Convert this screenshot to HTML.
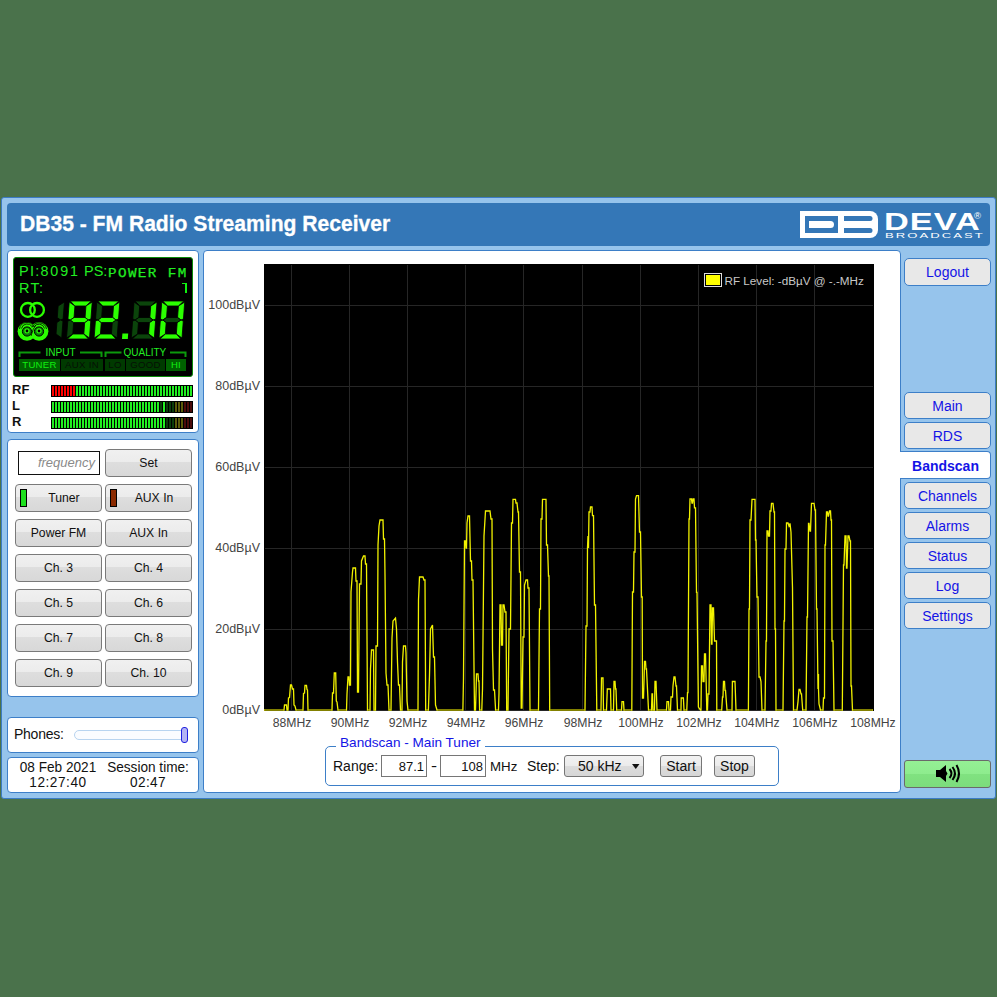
<!DOCTYPE html>
<html><head><meta charset="utf-8"><style>
*{box-sizing:border-box;margin:0;padding:0}
html,body{width:997px;height:997px;overflow:hidden;background:#4a724b;font-family:"Liberation Sans",sans-serif;position:relative}
.a{position:absolute}
.frame{left:1px;top:197px;width:995px;height:602px;background:#96c4ec;border:1px solid #3c7cc4;border-radius:3px}
.hdr{left:7px;top:203px;width:983px;height:43px;background:#3477b7;border-radius:4px}
.title{left:20px;top:210.5px;letter-spacing:0px;font:bold 22.2px/25px "Liberation Sans",sans-serif;color:#fff;white-space:nowrap;transform:scaleX(0.95);transform-origin:0 0;-webkit-text-stroke:0.3px #fff}
.pnl{background:#fff;border:1px solid #3d7fc8;border-radius:4px}
.lcd{left:13px;top:257px;width:180px;height:120px;background:#000;border:1px solid #0a8a0a;border-radius:3px}
.g{color:#22ee22;white-space:nowrap}
.lbl{font:bold 13px/14px "Liberation Sans",sans-serif;color:#111}
.btn{height:28px;border:1px solid #7a7a7a;border-radius:4px;background:linear-gradient(#f0f0f0 0,#ececec 45%,#dedede 46%,#d8d8d8 100%);font:12.2px/26.2px "Liberation Sans",sans-serif;color:#111;text-align:center;white-space:nowrap}
.nav{left:904px;width:87px;height:27px;border:1px solid #3d7fc8;border-radius:5px;background:#e8e8e8;font:14px/26.6px "Liberation Sans",sans-serif;color:#1414e6;text-align:center}
.navact{left:900px;width:91px;height:28px;border:1px solid #3d7fc8;border-left:none;border-radius:0 4px 4px 0;background:#fff;font:bold 14px/28.2px "Liberation Sans",sans-serif;color:#1414e6;text-align:center;padding-left:1px}
.xl{font:12.2px/14px "Liberation Sans",sans-serif;color:#444;text-align:center}
.yl{font:12.5px/14px "Liberation Sans",sans-serif;color:#444;text-align:right}
.t13{font:14px/16px "Liberation Sans",sans-serif;color:#111;white-space:nowrap}
.inp{height:22px;border:1px solid #767676;background:#fff;font:13px/21.5px "Liberation Sans",sans-serif;color:#111;text-align:right;padding-right:2px}
.sbtn{height:22px;border:1px solid #767676;border-radius:3px;background:linear-gradient(#f2f2f2 0,#ebebeb 50%,#dcdcdc 51%,#d6d6d6 100%);font:14px/20px "Liberation Sans",sans-serif;color:#111;text-align:center}
</style></head><body>
<div class="a frame"></div>
<div class="a hdr"></div>
<div class="a title">DB35 - FM Radio Streaming Receiver</div>
<svg class="a" style="left:0;top:0" width="997" height="997">
<path d="M800,211 H870 A8,8 0 0 1 878,219 V230 A8,8 0 0 1 870,238 H800 Z" fill="#fff"/>
<rect x="805" y="216" width="33" height="17" fill="#3477b7"/>
<path d="M809,221 H830.5 A3.5,3.5 0 0 1 834,224.5 A3.5,3.5 0 0 1 830.5,228 H809 Z" fill="#fff"/>
<path d="M844,216 H870 A2.5,2.5 0 0 1 872.5,218.5 A2.5,2.5 0 0 1 870,221 H844 Z" fill="#3477b7"/>
<path d="M844,228 H870 A2.5,2.5 0 0 1 872.5,230.5 A2.5,2.5 0 0 1 870,233 H844 Z" fill="#3477b7"/>
</svg>
<div class="a" style="left:883.5px;top:209.5px;font:bold 23.5px/24px 'Liberation Sans',sans-serif;color:#fff;letter-spacing:0.7px;transform:scaleX(1.46);transform-origin:0 0;white-space:nowrap">DEVA</div>
<div class="a" style="left:884.5px;top:231.5px;font:7.8px/8px 'Liberation Sans',sans-serif;color:#fff;letter-spacing:1.2px;transform:scaleX(1.68);transform-origin:0 0;white-space:nowrap">BROADCAST</div>
<div class="a" style="left:974px;top:211px;font:9.5px/10px 'Liberation Sans',sans-serif;color:#fff">®</div>

<!-- left panel 1 -->
<div class="a pnl" style="left:7px;top:250px;width:192px;height:183px"></div>
<div class="a lcd"></div>
<div class="a g" style="left:19px;top:263px;font:14.5px/16px 'Liberation Sans',sans-serif;letter-spacing:1.3px">PI:</div>
<div class="a g" style="left:40.5px;top:262.5px;font:14.3px/16px 'Liberation Sans',sans-serif;letter-spacing:1.9px">8091</div>
<div class="a g" style="left:84px;top:263px;font:14.5px/16px 'Liberation Sans',sans-serif">PS:</div>
<div class="a g" style="left:107.5px;top:266px;font:13px/15px 'Liberation Mono',monospace;letter-spacing:1.25px;transform:scaleX(1.1);transform-origin:0 0;-webkit-text-stroke:0.25px #22ee22">POWER FM</div>
<div class="a g" style="left:19px;top:280px;font:14.5px/16px 'Liberation Sans',sans-serif;letter-spacing:1.3px">RT:</div>
<div class="a" style="left:182px;top:283px;width:5px;height:1.3px;background:#10f010"></div><div class="a" style="left:185px;top:283px;width:2px;height:10px;background:#10f010"></div>
<svg class="a" style="left:0;top:0" width="200" height="400">
<circle cx="27.9" cy="309.9" r="6.9" fill="none" stroke="#2bff00" stroke-width="2.3"/>
<circle cx="37" cy="309.9" r="6.9" fill="none" stroke="#2bff00" stroke-width="2.3"/>
<circle cx="27" cy="331.3" r="9.4" fill="#2bff00"/>
<circle cx="39" cy="331.3" r="9.4" fill="#2bff00"/>
<path d="M19.5,329 A7.6,7.6 0 0 1 34,327 M21.5,328.5 A5.8,5.8 0 0 1 32,326.5 M32,327.5 A7.6,7.6 0 0 1 46.5,329 M34,326.8 A5.8,5.8 0 0 1 44.5,328.5" fill="none" stroke="#000" stroke-width="0.8"/>
<circle cx="27" cy="331.5" r="4.6" fill="#0a7a0a" stroke="#000" stroke-width="1"/><circle cx="39" cy="331.5" r="4.6" fill="#0a7a0a" stroke="#000" stroke-width="1"/><circle cx="27" cy="330.8" r="2.6" fill="#2bff00"/><circle cx="39" cy="330.8" r="2.6" fill="#2bff00"/>
<path d="M31,336 Q33,328 36,325" fill="none" stroke="#000" stroke-width="0.8"/>
<circle cx="27" cy="331" r="1.4" fill="#000"/>
<circle cx="39" cy="331" r="1.4" fill="#000"/>
<g transform="translate(41.5,301) skewX(-4.3)"><polygon points="23,1 23,18 20.5,19 17,16.5 17,5" fill="#0b440b" stroke="#000" stroke-width="0.8" stroke-linejoin="round"/><polygon points="23,20 23,37 17,33 17,21.5 20.5,19" fill="#0b440b" stroke="#000" stroke-width="0.8" stroke-linejoin="round"/></g><g transform="translate(69.3,301) skewX(-4.3)"><polygon points="1,0 22,0 17,5 6,5" fill="#2bff00" stroke="#000" stroke-width="0.8" stroke-linejoin="round"/><polygon points="23,1 23,18 20.5,19 17,16.5 17,5" fill="#2bff00" stroke="#000" stroke-width="0.8" stroke-linejoin="round"/><polygon points="23,20 23,37 17,33 17,21.5 20.5,19" fill="#2bff00" stroke="#000" stroke-width="0.8" stroke-linejoin="round"/><polygon points="1,38 22,38 17,33 6,33" fill="#2bff00" stroke="#000" stroke-width="0.8" stroke-linejoin="round"/><polygon points="0,20 2.5,19 6,21.5 6,33 0,37" fill="#0b440b" stroke="#000" stroke-width="0.8" stroke-linejoin="round"/><polygon points="0,1 6,5 6,16.5 2.5,19 0,18" fill="#2bff00" stroke="#000" stroke-width="0.8" stroke-linejoin="round"/><polygon points="2.5,19 6,16.5 17,16.5 20.5,19 17,21.5 6,21.5" fill="#2bff00" stroke="#000" stroke-width="0.8" stroke-linejoin="round"/></g><g transform="translate(96.9,301) skewX(-4.3)"><polygon points="1,0 22,0 17,5 6,5" fill="#2bff00" stroke="#000" stroke-width="0.8" stroke-linejoin="round"/><polygon points="23,1 23,18 20.5,19 17,16.5 17,5" fill="#2bff00" stroke="#000" stroke-width="0.8" stroke-linejoin="round"/><polygon points="23,20 23,37 17,33 17,21.5 20.5,19" fill="#0b440b" stroke="#000" stroke-width="0.8" stroke-linejoin="round"/><polygon points="1,38 22,38 17,33 6,33" fill="#2bff00" stroke="#000" stroke-width="0.8" stroke-linejoin="round"/><polygon points="0,20 2.5,19 6,21.5 6,33 0,37" fill="#2bff00" stroke="#000" stroke-width="0.8" stroke-linejoin="round"/><polygon points="0,1 6,5 6,16.5 2.5,19 0,18" fill="#0b440b" stroke="#000" stroke-width="0.8" stroke-linejoin="round"/><polygon points="2.5,19 6,16.5 17,16.5 20.5,19 17,21.5 6,21.5" fill="#2bff00" stroke="#000" stroke-width="0.8" stroke-linejoin="round"/></g><polygon points="122.4,333.5 128.2,333.5 127.8,339 122,339" fill="#2bff00"/><g transform="translate(134.1,301) skewX(-4.3)"><polygon points="1,0 22,0 17,5 6,5" fill="#0b440b" stroke="#000" stroke-width="0.8" stroke-linejoin="round"/><polygon points="23,1 23,18 20.5,19 17,16.5 17,5" fill="#2bff00" stroke="#000" stroke-width="0.8" stroke-linejoin="round"/><polygon points="23,20 23,37 17,33 17,21.5 20.5,19" fill="#2bff00" stroke="#000" stroke-width="0.8" stroke-linejoin="round"/><polygon points="1,38 22,38 17,33 6,33" fill="#0b440b" stroke="#000" stroke-width="0.8" stroke-linejoin="round"/><polygon points="0,20 2.5,19 6,21.5 6,33 0,37" fill="#0b440b" stroke="#000" stroke-width="0.8" stroke-linejoin="round"/><polygon points="0,1 6,5 6,16.5 2.5,19 0,18" fill="#0b440b" stroke="#000" stroke-width="0.8" stroke-linejoin="round"/><polygon points="2.5,19 6,16.5 17,16.5 20.5,19 17,21.5 6,21.5" fill="#0b440b" stroke="#000" stroke-width="0.8" stroke-linejoin="round"/></g><g transform="translate(161.8,301) skewX(-4.3)"><polygon points="1,0 22,0 17,5 6,5" fill="#2bff00" stroke="#000" stroke-width="0.8" stroke-linejoin="round"/><polygon points="23,1 23,18 20.5,19 17,16.5 17,5" fill="#2bff00" stroke="#000" stroke-width="0.8" stroke-linejoin="round"/><polygon points="23,20 23,37 17,33 17,21.5 20.5,19" fill="#2bff00" stroke="#000" stroke-width="0.8" stroke-linejoin="round"/><polygon points="1,38 22,38 17,33 6,33" fill="#2bff00" stroke="#000" stroke-width="0.8" stroke-linejoin="round"/><polygon points="0,20 2.5,19 6,21.5 6,33 0,37" fill="#2bff00" stroke="#000" stroke-width="0.8" stroke-linejoin="round"/><polygon points="0,1 6,5 6,16.5 2.5,19 0,18" fill="#2bff00" stroke="#000" stroke-width="0.8" stroke-linejoin="round"/><polygon points="2.5,19 6,16.5 17,16.5 20.5,19 17,21.5 6,21.5" fill="#0b440b" stroke="#000" stroke-width="0.8" stroke-linejoin="round"/></g>
<path d="M19.5,357 V352.5 H40.5 M80,352.5 H101.5 V357" fill="none" stroke="#0c9a0c" stroke-width="2"/>
<path d="M105.5,357 V352.5 H121.5 M170,352.5 H185.5 V357" fill="none" stroke="#0c9a0c" stroke-width="2"/>
<rect x="19" y="359" width="41" height="12" fill="#006200"/>
<rect x="61" y="359" width="42" height="12" fill="#003a00"/>
<rect x="105" y="359" width="20" height="12" fill="#003a00"/>
<rect x="126" y="359" width="39" height="12" fill="#003a00"/>
<rect x="166" y="359" width="20" height="12" fill="#006200"/>
</svg>
<div class="a g" style="left:45.5px;top:347px;font:10px/12px 'Liberation Sans',sans-serif">INPUT</div>
<div class="a g" style="left:123.5px;top:347px;font:10px/12px 'Liberation Sans',sans-serif">QUALITY</div>
<div class="a" style="left:19px;top:359px;width:41px;font:9.6px/12px 'Liberation Sans',sans-serif;color:#10ee10;text-align:center;letter-spacing:0.3px">TUNER</div>
<div class="a" style="left:61px;top:359px;width:42px;font:9.6px/12px 'Liberation Sans',sans-serif;color:#061006;text-align:center;letter-spacing:0.3px">AUX IN</div>
<div class="a" style="left:105px;top:359px;width:20px;font:9.6px/12px 'Liberation Sans',sans-serif;color:#061006;text-align:center;letter-spacing:0.3px">LO</div>
<div class="a" style="left:126px;top:359px;width:39px;font:9.6px/12px 'Liberation Sans',sans-serif;color:#061006;text-align:center;letter-spacing:0.3px">GOOD</div>
<div class="a" style="left:166px;top:359px;width:20px;font:9.6px/12px 'Liberation Sans',sans-serif;color:#10ee10;text-align:center;letter-spacing:0.3px">HI</div>
<div class="a lbl" style="left:12px;top:383px">RF</div>
<div class="a lbl" style="left:12px;top:399px">L</div>
<div class="a lbl" style="left:12px;top:415px">R</div>
<div class="a" style="left:51px;top:385px;width:142px;height:12px;background:#000"></div><div class="a" style="left:52px;top:386px;width:2px;height:10px;background:#ff0000"></div><div class="a" style="left:55px;top:386px;width:2px;height:10px;background:#ff0000"></div><div class="a" style="left:58px;top:386px;width:2px;height:10px;background:#ff0000"></div><div class="a" style="left:61px;top:386px;width:2px;height:10px;background:#ff0000"></div><div class="a" style="left:64px;top:386px;width:2px;height:10px;background:#ff0000"></div><div class="a" style="left:67px;top:386px;width:2px;height:10px;background:#ff0000"></div><div class="a" style="left:70px;top:386px;width:2px;height:10px;background:#ff0000"></div><div class="a" style="left:73px;top:386px;width:2px;height:10px;background:#ff0000"></div><div class="a" style="left:76px;top:386px;width:2px;height:10px;background:#22ee22"></div><div class="a" style="left:79px;top:386px;width:2px;height:10px;background:#22ee22"></div><div class="a" style="left:82px;top:386px;width:2px;height:10px;background:#22ee22"></div><div class="a" style="left:85px;top:386px;width:2px;height:10px;background:#22ee22"></div><div class="a" style="left:88px;top:386px;width:2px;height:10px;background:#22ee22"></div><div class="a" style="left:91px;top:386px;width:2px;height:10px;background:#22ee22"></div><div class="a" style="left:94px;top:386px;width:2px;height:10px;background:#22ee22"></div><div class="a" style="left:97px;top:386px;width:2px;height:10px;background:#22ee22"></div><div class="a" style="left:100px;top:386px;width:2px;height:10px;background:#22ee22"></div><div class="a" style="left:103px;top:386px;width:2px;height:10px;background:#22ee22"></div><div class="a" style="left:106px;top:386px;width:2px;height:10px;background:#22ee22"></div><div class="a" style="left:109px;top:386px;width:2px;height:10px;background:#22ee22"></div><div class="a" style="left:112px;top:386px;width:2px;height:10px;background:#22ee22"></div><div class="a" style="left:115px;top:386px;width:2px;height:10px;background:#22ee22"></div><div class="a" style="left:118px;top:386px;width:2px;height:10px;background:#22ee22"></div><div class="a" style="left:121px;top:386px;width:2px;height:10px;background:#22ee22"></div><div class="a" style="left:124px;top:386px;width:2px;height:10px;background:#22ee22"></div><div class="a" style="left:127px;top:386px;width:2px;height:10px;background:#22ee22"></div><div class="a" style="left:130px;top:386px;width:2px;height:10px;background:#22ee22"></div><div class="a" style="left:133px;top:386px;width:2px;height:10px;background:#22ee22"></div><div class="a" style="left:136px;top:386px;width:2px;height:10px;background:#22ee22"></div><div class="a" style="left:139px;top:386px;width:2px;height:10px;background:#22ee22"></div><div class="a" style="left:142px;top:386px;width:2px;height:10px;background:#22ee22"></div><div class="a" style="left:145px;top:386px;width:2px;height:10px;background:#22ee22"></div><div class="a" style="left:148px;top:386px;width:2px;height:10px;background:#22ee22"></div><div class="a" style="left:151px;top:386px;width:2px;height:10px;background:#22ee22"></div><div class="a" style="left:154px;top:386px;width:2px;height:10px;background:#22ee22"></div><div class="a" style="left:157px;top:386px;width:2px;height:10px;background:#22ee22"></div><div class="a" style="left:160px;top:386px;width:2px;height:10px;background:#22ee22"></div><div class="a" style="left:163px;top:386px;width:2px;height:10px;background:#22ee22"></div><div class="a" style="left:166px;top:386px;width:2px;height:10px;background:#22ee22"></div><div class="a" style="left:169px;top:386px;width:2px;height:10px;background:#22ee22"></div><div class="a" style="left:172px;top:386px;width:2px;height:10px;background:#22ee22"></div><div class="a" style="left:175px;top:386px;width:2px;height:10px;background:#22ee22"></div><div class="a" style="left:178px;top:386px;width:2px;height:10px;background:#22ee22"></div><div class="a" style="left:181px;top:386px;width:2px;height:10px;background:#22ee22"></div><div class="a" style="left:184px;top:386px;width:2px;height:10px;background:#22ee22"></div><div class="a" style="left:187px;top:386px;width:2px;height:10px;background:#22ee22"></div><div class="a" style="left:190px;top:386px;width:2px;height:10px;background:#22ee22"></div><div class="a" style="left:51px;top:401px;width:142px;height:12px;background:#000"></div><div class="a" style="left:52px;top:402px;width:2px;height:10px;background:#22ee22"></div><div class="a" style="left:55px;top:402px;width:2px;height:10px;background:#22ee22"></div><div class="a" style="left:58px;top:402px;width:2px;height:10px;background:#22ee22"></div><div class="a" style="left:61px;top:402px;width:2px;height:10px;background:#22ee22"></div><div class="a" style="left:64px;top:402px;width:2px;height:10px;background:#22ee22"></div><div class="a" style="left:67px;top:402px;width:2px;height:10px;background:#22ee22"></div><div class="a" style="left:70px;top:402px;width:2px;height:10px;background:#22ee22"></div><div class="a" style="left:73px;top:402px;width:2px;height:10px;background:#22ee22"></div><div class="a" style="left:76px;top:402px;width:2px;height:10px;background:#22ee22"></div><div class="a" style="left:79px;top:402px;width:2px;height:10px;background:#22ee22"></div><div class="a" style="left:82px;top:402px;width:2px;height:10px;background:#22ee22"></div><div class="a" style="left:85px;top:402px;width:2px;height:10px;background:#22ee22"></div><div class="a" style="left:88px;top:402px;width:2px;height:10px;background:#22ee22"></div><div class="a" style="left:91px;top:402px;width:2px;height:10px;background:#22ee22"></div><div class="a" style="left:94px;top:402px;width:2px;height:10px;background:#22ee22"></div><div class="a" style="left:97px;top:402px;width:2px;height:10px;background:#22ee22"></div><div class="a" style="left:100px;top:402px;width:2px;height:10px;background:#22ee22"></div><div class="a" style="left:103px;top:402px;width:2px;height:10px;background:#22ee22"></div><div class="a" style="left:106px;top:402px;width:2px;height:10px;background:#22ee22"></div><div class="a" style="left:109px;top:402px;width:2px;height:10px;background:#22ee22"></div><div class="a" style="left:112px;top:402px;width:2px;height:10px;background:#22ee22"></div><div class="a" style="left:115px;top:402px;width:2px;height:10px;background:#22ee22"></div><div class="a" style="left:118px;top:402px;width:2px;height:10px;background:#22ee22"></div><div class="a" style="left:121px;top:402px;width:2px;height:10px;background:#22ee22"></div><div class="a" style="left:124px;top:402px;width:2px;height:10px;background:#22ee22"></div><div class="a" style="left:127px;top:402px;width:2px;height:10px;background:#22ee22"></div><div class="a" style="left:130px;top:402px;width:2px;height:10px;background:#22ee22"></div><div class="a" style="left:133px;top:402px;width:2px;height:10px;background:#22ee22"></div><div class="a" style="left:136px;top:402px;width:2px;height:10px;background:#22ee22"></div><div class="a" style="left:139px;top:402px;width:2px;height:10px;background:#22ee22"></div><div class="a" style="left:142px;top:402px;width:2px;height:10px;background:#22ee22"></div><div class="a" style="left:145px;top:402px;width:2px;height:10px;background:#22ee22"></div><div class="a" style="left:148px;top:402px;width:2px;height:10px;background:#22ee22"></div><div class="a" style="left:151px;top:402px;width:2px;height:10px;background:#22ee22"></div><div class="a" style="left:154px;top:402px;width:2px;height:10px;background:#22ee22"></div><div class="a" style="left:157px;top:402px;width:2px;height:10px;background:#22ee22"></div><div class="a" style="left:160px;top:402px;width:2px;height:10px;background:#0a3d0a"></div><div class="a" style="left:163px;top:402px;width:2px;height:10px;background:#22ee22"></div><div class="a" style="left:166px;top:402px;width:2px;height:10px;background:#0a3d0a"></div><div class="a" style="left:169px;top:402px;width:2px;height:10px;background:#0a3d0a"></div><div class="a" style="left:172px;top:402px;width:2px;height:10px;background:#0a3d0a"></div><div class="a" style="left:175px;top:402px;width:2px;height:10px;background:#5a5a0a"></div><div class="a" style="left:178px;top:402px;width:2px;height:10px;background:#5a5a0a"></div><div class="a" style="left:181px;top:402px;width:2px;height:10px;background:#5a5a0a"></div><div class="a" style="left:184px;top:402px;width:2px;height:10px;background:#4a0a0a"></div><div class="a" style="left:187px;top:402px;width:2px;height:10px;background:#4a0a0a"></div><div class="a" style="left:190px;top:402px;width:2px;height:10px;background:#4a0a0a"></div><div class="a" style="left:51px;top:417px;width:142px;height:12px;background:#000"></div><div class="a" style="left:52px;top:418px;width:2px;height:10px;background:#22ee22"></div><div class="a" style="left:55px;top:418px;width:2px;height:10px;background:#22ee22"></div><div class="a" style="left:58px;top:418px;width:2px;height:10px;background:#22ee22"></div><div class="a" style="left:61px;top:418px;width:2px;height:10px;background:#22ee22"></div><div class="a" style="left:64px;top:418px;width:2px;height:10px;background:#22ee22"></div><div class="a" style="left:67px;top:418px;width:2px;height:10px;background:#22ee22"></div><div class="a" style="left:70px;top:418px;width:2px;height:10px;background:#22ee22"></div><div class="a" style="left:73px;top:418px;width:2px;height:10px;background:#22ee22"></div><div class="a" style="left:76px;top:418px;width:2px;height:10px;background:#22ee22"></div><div class="a" style="left:79px;top:418px;width:2px;height:10px;background:#22ee22"></div><div class="a" style="left:82px;top:418px;width:2px;height:10px;background:#22ee22"></div><div class="a" style="left:85px;top:418px;width:2px;height:10px;background:#22ee22"></div><div class="a" style="left:88px;top:418px;width:2px;height:10px;background:#22ee22"></div><div class="a" style="left:91px;top:418px;width:2px;height:10px;background:#22ee22"></div><div class="a" style="left:94px;top:418px;width:2px;height:10px;background:#22ee22"></div><div class="a" style="left:97px;top:418px;width:2px;height:10px;background:#22ee22"></div><div class="a" style="left:100px;top:418px;width:2px;height:10px;background:#22ee22"></div><div class="a" style="left:103px;top:418px;width:2px;height:10px;background:#22ee22"></div><div class="a" style="left:106px;top:418px;width:2px;height:10px;background:#22ee22"></div><div class="a" style="left:109px;top:418px;width:2px;height:10px;background:#22ee22"></div><div class="a" style="left:112px;top:418px;width:2px;height:10px;background:#22ee22"></div><div class="a" style="left:115px;top:418px;width:2px;height:10px;background:#22ee22"></div><div class="a" style="left:118px;top:418px;width:2px;height:10px;background:#22ee22"></div><div class="a" style="left:121px;top:418px;width:2px;height:10px;background:#22ee22"></div><div class="a" style="left:124px;top:418px;width:2px;height:10px;background:#22ee22"></div><div class="a" style="left:127px;top:418px;width:2px;height:10px;background:#22ee22"></div><div class="a" style="left:130px;top:418px;width:2px;height:10px;background:#22ee22"></div><div class="a" style="left:133px;top:418px;width:2px;height:10px;background:#22ee22"></div><div class="a" style="left:136px;top:418px;width:2px;height:10px;background:#22ee22"></div><div class="a" style="left:139px;top:418px;width:2px;height:10px;background:#22ee22"></div><div class="a" style="left:142px;top:418px;width:2px;height:10px;background:#22ee22"></div><div class="a" style="left:145px;top:418px;width:2px;height:10px;background:#22ee22"></div><div class="a" style="left:148px;top:418px;width:2px;height:10px;background:#22ee22"></div><div class="a" style="left:151px;top:418px;width:2px;height:10px;background:#22ee22"></div><div class="a" style="left:154px;top:418px;width:2px;height:10px;background:#22ee22"></div><div class="a" style="left:157px;top:418px;width:2px;height:10px;background:#22ee22"></div><div class="a" style="left:160px;top:418px;width:2px;height:10px;background:#22ee22"></div><div class="a" style="left:163px;top:418px;width:2px;height:10px;background:#22ee22"></div><div class="a" style="left:166px;top:418px;width:2px;height:10px;background:#0a3d0a"></div><div class="a" style="left:169px;top:418px;width:2px;height:10px;background:#0a3d0a"></div><div class="a" style="left:172px;top:418px;width:2px;height:10px;background:#0a3d0a"></div><div class="a" style="left:175px;top:418px;width:2px;height:10px;background:#5a5a0a"></div><div class="a" style="left:178px;top:418px;width:2px;height:10px;background:#5a5a0a"></div><div class="a" style="left:181px;top:418px;width:2px;height:10px;background:#5a5a0a"></div><div class="a" style="left:184px;top:418px;width:2px;height:10px;background:#4a0a0a"></div><div class="a" style="left:187px;top:418px;width:2px;height:10px;background:#4a0a0a"></div><div class="a" style="left:190px;top:418px;width:2px;height:10px;background:#4a0a0a"></div>

<!-- left panel 2 -->
<div class="a pnl" style="left:7px;top:439px;width:192px;height:258px"></div>
<div class="a" style="left:18px;top:451px;width:82px;height:24px;border:1px solid #111;background:#fff"></div><div class="a" style="left:18px;top:451px;width:77px;height:24px;font:italic 13px/24px 'Liberation Sans',sans-serif;color:#8a8a8a;text-align:right">frequency</div><div class="a btn" style="left:105px;top:449px;width:87px;">Set</div><div class="a btn" style="left:15px;top:484px;width:87px;padding-left:11px;">Tuner</div><div class="a" style="left:20px;top:489px;width:7px;height:18px;background:#1ee01e;border:1px solid #000"></div><div class="a btn" style="left:105px;top:484px;width:87px;padding-left:11px;">AUX In</div><div class="a" style="left:110px;top:489px;width:7px;height:18px;background:#8b2a00;border:1px solid #000"></div><div class="a btn" style="left:15px;top:519px;width:87px;">Power FM</div><div class="a btn" style="left:105px;top:519px;width:87px;">AUX In</div><div class="a btn" style="left:15px;top:554px;width:87px;">Ch. 3</div><div class="a btn" style="left:105px;top:554px;width:87px;">Ch. 4</div><div class="a btn" style="left:15px;top:589px;width:87px;">Ch. 5</div><div class="a btn" style="left:105px;top:589px;width:87px;">Ch. 6</div><div class="a btn" style="left:15px;top:624px;width:87px;">Ch. 7</div><div class="a btn" style="left:105px;top:624px;width:87px;">Ch. 8</div><div class="a btn" style="left:15px;top:659px;width:87px;">Ch. 9</div><div class="a btn" style="left:105px;top:659px;width:87px;">Ch. 10</div>

<!-- phones -->
<div class="a pnl" style="left:7px;top:717px;width:192px;height:36px"></div>
<div class="a t13" style="left:14px;top:725.5px;font-size:14px;letter-spacing:-0.25px">Phones:</div>
<div class="a" style="left:74px;top:730px;width:113px;height:10px;border:1px solid #b8d4f0;border-radius:5px;background:#fafcff"></div>
<div class="a" style="left:181px;top:727px;width:7px;height:16px;border:1px solid #2020e0;border-radius:3px;background:#b4b4f4"></div>

<!-- date -->
<div class="a pnl" style="left:7px;top:757px;width:192px;height:36px"></div>
<div class="a t13" style="left:9px;top:760.3px;width:98px;text-align:center;line-height:14.8px;font-size:14.8px;transform:scaleX(0.92);transform-origin:50% 0">08 Feb 2021<br><span style='letter-spacing:0.6px'>12:27:40</span></div>
<div class="a t13" style="left:99.5px;top:760.3px;width:96px;text-align:center;line-height:14.8px;font-size:14.8px;transform:scaleX(0.92);transform-origin:50% 0">Session time:<br><span style='letter-spacing:0.4px'>02:47</span></div>

<!-- main panel -->
<div class="a pnl" style="left:203px;top:250px;width:698px;height:543px"></div>
<svg class="a" style="left:0;top:0" width="997" height="997">
<rect x="264" y="264" width="610" height="447" fill="#000"/>
<line x1="291.5" y1="265" x2="291.5" y2="710" stroke="#262626" stroke-width="1"/><line x1="349.5" y1="265" x2="349.5" y2="710" stroke="#262626" stroke-width="1"/><line x1="407.5" y1="265" x2="407.5" y2="710" stroke="#262626" stroke-width="1"/><line x1="465.5" y1="265" x2="465.5" y2="710" stroke="#262626" stroke-width="1"/><line x1="523.5" y1="265" x2="523.5" y2="710" stroke="#262626" stroke-width="1"/><line x1="582.5" y1="265" x2="582.5" y2="710" stroke="#262626" stroke-width="1"/><line x1="640.5" y1="265" x2="640.5" y2="710" stroke="#262626" stroke-width="1"/><line x1="698.5" y1="265" x2="698.5" y2="710" stroke="#262626" stroke-width="1"/><line x1="756.5" y1="265" x2="756.5" y2="710" stroke="#262626" stroke-width="1"/><line x1="814.5" y1="265" x2="814.5" y2="710" stroke="#262626" stroke-width="1"/><line x1="265" y1="305.5" x2="873" y2="305.5" stroke="#262626" stroke-width="1"/><line x1="265" y1="386.5" x2="873" y2="386.5" stroke="#262626" stroke-width="1"/><line x1="265" y1="467.5" x2="873" y2="467.5" stroke="#262626" stroke-width="1"/><line x1="265" y1="548.5" x2="873" y2="548.5" stroke="#262626" stroke-width="1"/><line x1="265" y1="629.5" x2="873" y2="629.5" stroke="#262626" stroke-width="1"/><line x1="265" y1="710.5" x2="873" y2="710.5" stroke="#262626" stroke-width="1"/>
<polyline points="264,710 284,710 284.5,705 286.5,705 287,710 288,710 288.5,698 289.5,697.5 290.5,685 291.5,685 292.5,689 293.5,689 294,705 295,706 296,710 303,710 303.5,693.5 304.5,693 305,685.5 306.5,685.5 307,689.5 307.5,690 308,710 332,710 332.5,693 333.5,693 334.3,673 335.7,673 336.3,701 337,702 338,710 346.5,710 347,694 348,677 349,677 349.5,685 350.5,685 351,592 352.5,572 353,568 355.5,568 356,581 357,581 357.5,692 358.5,692 359.5,584 361,584 361.5,561 363.5,556 365,556 365.5,564 366.5,564 367.5,710 370,710 370.5,669 371.5,650 373.5,650 374,710 375.5,710 376,646 377.5,646 378,545 379,526 380,520 383,520 383.5,539 384.5,539 385,575 386,673 387,685 388,685 389,710 391,710 392,638 393,621 395.5,618 396.5,629 397.5,662 398.5,685 399.5,685 400.5,710 402,710 402.5,662 403.5,646 405.5,646 406,653 407,701 408,710 418,710 418.5,600 419.5,577 423,577 424,580 425,580 425.7,710 428.4,710 429.5,675 430.5,629 432.5,625 433.5,657 434.5,657 435.5,705 437,710 462.9,710 463.5,678 464.5,541 465.5,541 466,548 466.5,548 467,523 468,516 469.5,516 470.5,561 471.5,561 472,580 473,580 474.5,710 475.5,710 476,693 476.5,674 478,674 478.5,681 479,681 479.6,710 481.8,710 482.5,689 484,536 485.5,511 490,511 491,519 492,519 492.5,649 493.5,690 494.5,690 495.6,710 498.5,710 499,693 500,605 501,605 501.5,645 502.5,645 503,605 504,605 505,612 506,612 506.7,710 508,710 509,629 510.5,629 511.5,523 512.5,523 513,499.4 515.5,499.4 516,503 517,503 518,512 518.5,512 519.5,572 520.5,572 521.2,708 522,708 523,637 524,637 524.5,585 526,580 527.5,580 528,588 529,588 530,710 538.5,710 539.5,609 540.5,609 541,519 542,519 542.5,499.4 546,499.4 546.5,545 547.5,545 548.5,576 549,576 549.7,710 585,710 586,626 587,626 587.5,548 588,536 588.5,548 589,512 590,512 590.5,507 592,507 592.5,515.6 593.5,515.6 594.5,605 595.5,605 596.8,710 601,710 601.5,678 603,678 603.5,710 606.5,710 607.3,689 610.5,689 611,710 613.5,710 614,681.5 615,681.5 615.5,689 616,689 616.7,710 621.5,710 622,701.6 623.5,701.6 624,710 631.8,710 632.5,592 633.5,592 634,552 635,552 635.5,499 636.5,495.6 638.5,495.6 639.5,532 640.5,532 641.5,597 642.2,597 642.5,698 643.5,698 644,681.5 644.5,661.5 645.5,661.5 646,669 646.5,669 648.5,710 651.5,710 652,694 652.5,694 653,710 654.5,710 655,681.5 656,681.5 657,710 666.5,710 667,701.6 668.5,701.6 669,710 670.5,710 671,697 672.5,697 673,686 674,677 675,677 676,686 676.5,686 677.5,710 681,710 681.2,698 683.4,698 684,710 686.8,710 687.5,692.7 688,692.7 689,519 689.5,519 690,499 691.5,499 692,503 692.5,503 693,499 694,499 694.5,507.8 695.5,507.8 696.5,592.4 697,592.4 698.4,707 700.5,710 701,710 701.5,666 702.5,666 703,681.5 704,681.5 704.5,654 705.5,654 706.8,710 707.5,710 708,694 709,694 710,605 711,605 711.5,644 712,644 712.5,608 713.5,608 714.5,641 716.5,641 716.8,710 721.7,710 722.5,697 723,697 723.5,681.5 724.5,681.5 725,690.4 725.5,690.4 727,710 732,710 732.4,681.5 735,681.5 736,710 748.4,710 749,609 749.5,609 750,520 751,520 752,499.4 755,499.4 755.5,540 756,540 757,597 758,597 759,677 760,677 761,681.5 762,710 765,710 766,641 766.5,641 767,531 768,531 768.5,536 769.5,536 770,511 771,511 771.5,503.4 773,503.4 774,512 774.5,512 775,629 775.5,629 776,710 783,710 784,621 784.5,621 785,549 786,549 786.5,523 788,523 789,526 790,523.4 791,532.3 792.5,588 793.5,710 797,710 798,701.6 799,689.3 800,689.3 801,693.8 801.5,693.8 802.7,710 806,710 807,617 807.5,617 808.5,523.4 809,523.4 810,531 810.5,531 811.5,503.4 814,503.4 815,510 815.5,510 816.5,609 817,609 818,689 818.5,674 818.5,689 819,704 820.5,710 823,710 823.5,698 824.5,698 825,545 825.5,545 826.5,512 827.5,512 828,516 828.5,516 829.5,511 830.5,511 831,520 831.5,520 832,641 833,641 834,710 842.3,710 843.5,565 844,565 845,536 846,536 846.5,568 847,568 848,536 849,536 850,541 850.5,541 851,686 851.5,686 852.5,710 873,710" fill="none" stroke="#f2f200" stroke-width="1.3" stroke-linejoin="miter"/>
<rect x="264.6" y="709" width="18.8" height="2" fill="#828000"/><rect x="287.6" y="709" width="0.0" height="2" fill="#828000"/><rect x="296.6" y="709" width="5.8" height="2" fill="#828000"/><rect x="308.6" y="709" width="22.8" height="2" fill="#828000"/><rect x="338.6" y="709" width="7.3" height="2" fill="#828000"/><rect x="368.1" y="709" width="1.3" height="2" fill="#828000"/><rect x="374.6" y="709" width="0.3" height="2" fill="#828000"/><rect x="389.6" y="709" width="0.8" height="2" fill="#828000"/><rect x="401.1" y="709" width="0.3" height="2" fill="#828000"/><rect x="408.6" y="709" width="8.8" height="2" fill="#828000"/><rect x="426.3" y="709" width="1.5" height="2" fill="#828000"/><rect x="437.6" y="709" width="24.7" height="2" fill="#828000"/><rect x="475.1" y="709" width="0.0" height="2" fill="#828000"/><rect x="480.2" y="709" width="1.0" height="2" fill="#828000"/><rect x="496.2" y="709" width="1.7" height="2" fill="#828000"/><rect x="507.3" y="709" width="0.1" height="2" fill="#828000"/><rect x="530.6" y="709" width="7.3" height="2" fill="#828000"/><rect x="550.3" y="709" width="34.1" height="2" fill="#828000"/><rect x="597.4" y="709" width="3.0" height="2" fill="#828000"/><rect x="604.1" y="709" width="1.8" height="2" fill="#828000"/><rect x="611.6" y="709" width="1.3" height="2" fill="#828000"/><rect x="617.3" y="709" width="3.6" height="2" fill="#828000"/><rect x="624.6" y="709" width="6.6" height="2" fill="#828000"/><rect x="649.1" y="709" width="1.8" height="2" fill="#828000"/><rect x="653.6" y="709" width="0.3" height="2" fill="#828000"/><rect x="657.6" y="709" width="8.3" height="2" fill="#828000"/><rect x="669.6" y="709" width="0.3" height="2" fill="#828000"/><rect x="678.1" y="709" width="2.3" height="2" fill="#828000"/><rect x="684.6" y="709" width="1.6" height="2" fill="#828000"/><rect x="701.1" y="709" width="0.0" height="2" fill="#828000"/><rect x="707.4" y="709" width="0.0" height="2" fill="#828000"/><rect x="717.4" y="709" width="3.7" height="2" fill="#828000"/><rect x="727.6" y="709" width="3.8" height="2" fill="#828000"/><rect x="736.6" y="709" width="11.2" height="2" fill="#828000"/><rect x="762.6" y="709" width="1.8" height="2" fill="#828000"/><rect x="776.6" y="709" width="5.8" height="2" fill="#828000"/><rect x="794.1" y="709" width="2.3" height="2" fill="#828000"/><rect x="803.3" y="709" width="2.1" height="2" fill="#828000"/><rect x="821.1" y="709" width="1.3" height="2" fill="#828000"/><rect x="834.6" y="709" width="7.1" height="2" fill="#828000"/><rect x="853.1" y="709" width="19.3" height="2" fill="#828000"/>
<rect x="704.5" y="273.5" width="17" height="13" fill="#000" stroke="#ddd" stroke-width="1"/>
<rect x="706" y="275" width="14" height="10" fill="#ffff00"/>
</svg>
<div class="a" style="left:724.5px;top:274px;font:11.7px/14px 'Liberation Sans',sans-serif;color:#c8c8c8;white-space:nowrap">RF Level: -dBµV @ -.-MHz</div>
<div class="a xl" style="left:252.0px;top:715.8px;width:80px">88MHz</div><div class="a xl" style="left:310.0px;top:715.8px;width:80px">90MHz</div><div class="a xl" style="left:368.0px;top:715.8px;width:80px">92MHz</div><div class="a xl" style="left:426.0px;top:715.8px;width:80px">94MHz</div><div class="a xl" style="left:484.0px;top:715.8px;width:80px">96MHz</div><div class="a xl" style="left:543.0px;top:715.8px;width:80px">98MHz</div><div class="a xl" style="left:601.0px;top:715.8px;width:80px">100MHz</div><div class="a xl" style="left:659.0px;top:715.8px;width:80px">102MHz</div><div class="a xl" style="left:717.0px;top:715.8px;width:80px">104MHz</div><div class="a xl" style="left:775.0px;top:715.8px;width:80px">106MHz</div><div class="a xl" style="left:833.0px;top:715.8px;width:80px">108MHz</div>
<div class="a yl" style="left:190px;top:297.5px;width:70px">100dBµV</div><div class="a yl" style="left:190px;top:378.5px;width:70px">80dBµV</div><div class="a yl" style="left:190px;top:459.5px;width:70px">60dBµV</div><div class="a yl" style="left:190px;top:540.5px;width:70px">40dBµV</div><div class="a yl" style="left:190px;top:621.5px;width:70px">20dBµV</div><div class="a yl" style="left:190px;top:702.5px;width:70px">0dBµV</div>

<!-- fieldset -->
<div class="a" style="left:325px;top:746px;width:454px;height:40px;border:1px solid #3d7fc8;border-radius:5px"></div>
<div class="a" style="left:336px;top:735px;padding:0 4px;background:#fff;font:13.6px/16px 'Liberation Sans',sans-serif;color:#1414e6;white-space:nowrap">Bandscan - Main Tuner</div>
<div class="a t13" style="left:333px;top:758px">Range:</div>
<div class="a inp" style="left:381px;top:755px;width:46px">87.1</div>
<div class="a t13" style="left:431px;top:758px;transform:scaleX(1.3);transform-origin:0 0">-</div>
<div class="a inp" style="left:440px;top:755px;width:46px">108</div>
<div class="a t13" style="left:490px;top:758.5px;font-size:13.3px">MHz</div>
<div class="a t13" style="left:527px;top:758px">Step:</div>
<div class="a sbtn" style="left:564px;top:755px;width:80px;text-align:left;padding-left:13px">50 kHz</div>
<svg class="a" style="left:632px;top:764px" width="10" height="6"><path d="M0,0 H7.5 L3.75,5 Z" fill="#111"/></svg>
<div class="a sbtn" style="left:660px;top:755px;width:42px">Start</div>
<div class="a sbtn" style="left:714px;top:755px;width:41px">Stop</div>

<!-- nav -->
<div class="a nav" style="top:258px;height:28px;line-height:26px">Logout</div>
<div class="a" style="left:900px;top:255px;width:1px;height:197px;background:#3d7fc8"></div>
<div class="a" style="left:900px;top:478px;width:1px;height:310px;background:#3d7fc8"></div>
<div class="a nav" style="top:392px">Main</div><div class="a nav" style="top:422px">RDS</div><div class="a navact" style="top:451px">Bandscan</div><div class="a nav" style="top:482px">Channels</div><div class="a nav" style="top:512px">Alarms</div><div class="a nav" style="top:542px">Status</div><div class="a nav" style="top:572px">Log</div><div class="a nav" style="top:602px">Settings</div>
<div class="a" style="left:904px;top:760px;width:87px;height:28px;border:1px solid #6a6a6a;border-radius:3px;background:linear-gradient(#94f094 0,#8eec8e 50%,#80e280 51%,#7cdc7c 100%)"></div>
<svg class="a" style="left:933px;top:764px" width="30" height="20">
<path d="M3,6 H7 L13,1 V7 L14.5,9.5 L13,12 V18 L7,13 H3 Z" fill="#000"/>
<path d="M16.5,5 Q20.5,9.5 16.5,14" fill="none" stroke="#000" stroke-width="2"/>
<path d="M19.5,3 Q24.5,9.5 19.5,16" fill="none" stroke="#000" stroke-width="2"/>
<path d="M23.5,1 Q28.5,9.5 23.5,18" fill="none" stroke="#000" stroke-width="2"/>
</svg>
</body></html>
